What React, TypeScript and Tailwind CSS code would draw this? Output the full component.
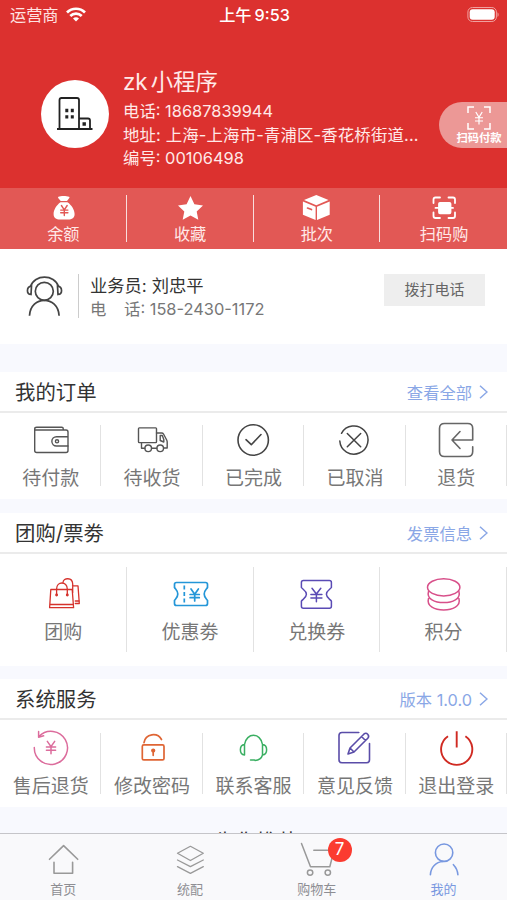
import type { ReactNode } from "react";

interface Entry {
  label: string;
  icon: ReactNode;
}

const yen = (cx: number, top: number, h: number, w: number) =>
  `M${cx - w * 0.8} ${top}L${cx} ${top + h * 0.43}L${cx + w * 0.8} ${top}M${cx} ${top + h * 0.43}V${top + h}M${cx - w} ${top + h * 0.46}H${cx + w}M${cx - w} ${top + h * 0.72}H${cx + w}`;

function Icon({
  color = "#555",
  stroke = 1.4,
  h = 40,
  children,
}: {
  color?: string;
  stroke?: number;
  h?: number;
  children: ReactNode;
}) {
  return (
    <svg
      width="44"
      height={h}
      viewBox={`0 0 44 ${h}`}
      fill="none"
      stroke={color}
      strokeWidth={stroke}
      strokeLinecap="round"
      strokeLinejoin="round"
      className="block shrink-0"
    >
      {children}
    </svg>
  );
}

const shortcuts: Entry[] = [
  {
    label: "余额",
    icon: (
      <Icon h={30} color="none">
        <path fill="#fff" d="M17.5 2.8c2-1.2 8-1.2 10.5 0 .8.4.6 1-.1 1.8L26 7h-6.300l-2.100-2.500c-.6-.7-.8-1.300-.1-1.700zM19.500 8.200h7c4 2.700 7.100 7.600 7.100 11.800 0 4-2.600 5.500-6.500 5.500h-8c-4 0-6.500-1.500-6.500-5.500 0-4.200 3-9.100 6.900-11.800z" />
        <path stroke="#e25855" strokeWidth="1.400" d={yen(23.3, 11.5, 10, 3.6)} />
      </Icon>
    ),
  },
  {
    label: "收藏",
    icon: (
      <Icon h={30} color="none">
        <path fill="#fff" d="M22.500 2l3.900 8.300 8.600 1.100-6.300 6.100 1.600 8.300-7.800-4.200-7.800 4.200 1.600-8.300L10 11.400l8.600-1.100z" />
      </Icon>
    ),
  },
  {
    label: "批次",
    icon: (
      <Icon h={30} color="none">
        <path fill="#fff" d="M22.300 1l12.200 5-12.200 5.200L10 6zM8.900 7.500l12.700 5.200V26L8.900 20.700zM35.700 7.500L23 12.700V26l12.700-5.300z" />
        <path stroke="#e25855" strokeWidth="1.600" d="M13.500 14l4 1.600" />
      </Icon>
    ),
  },
  {
    label: "扫码购",
    icon: (
      <Icon h={30} color="#fff" stroke={1.8}>
        <path d="M11.500 9V5.500q0-2 2-2H18M26.500 3.500H31q2 0 2 2V9M33 18.500V22q0 2-2 2h-4.500M18 24h-4.500q-2 0-2-2v-3.500M13.500 13.900h17.500" />
        <rect x="17" y="8.800" width="11.500" height="10.500" rx="1" fill="#fff" />
      </Icon>
    ),
  },
];

const orders: Entry[] = [
  {
    label: "待付款",
    icon: (
      <Icon>
        <path d="M40 16V12q0-2-2-2H6.700v20.500q0 2 2 2H38q2 0 2-2V26M6.700 10V9q0-1.700 2-1.700h25q1.600 0 1.600 1.700v1" />
        <path d="M40 16.700H28.500a4.600 4.600 0 0 0 0 9.300H40z" />
        <circle cx="29" cy="21.300" r="1.600" />
      </Icon>
    ),
  },
  {
    label: "待收货",
    icon: (
      <Icon>
        <rect x="8.500" y="7.900" width="18" height="14.700" rx=".8" />
        <path d="M26.500 13h5.200q1.200 0 1.800 1l3.200 6q.5 1 .5 2v6h-3.500M26.900 28.200h-5.300M14.900 28.200h-3.400v-5.600" />
        <path d="M30.200 15.500v5l3.600 1.500v-2.500l-1.500-4z" />
        <circle cx="18.200" cy="28.300" r="3.300" />
        <circle cx="30.200" cy="28.300" r="3.300" />
      </Icon>
    ),
  },
  {
    label: "已完成",
    icon: (
      <Icon color="#444" stroke={1.600}>
        <circle cx="22.200" cy="20" r="15.200" />
        <path d="M15 19.700l5.300 5L30 14.500" />
      </Icon>
    ),
  },
  {
    label: "已取消",
    icon: (
      <Icon color="#444" stroke={1.500}>
        <path d="M7.800 21a14.100 14.100 0 1 0 1.700-7.700M15.300 13.500l13.400 13.300M28.700 13.500L15.300 26.800" />
      </Icon>
    ),
  },
  {
    label: "退货",
    icon: (
      <Icon color="#666" stroke={1.600}>
        <path d="M38.700 26.700v4.800q0 5-5 5H10.500q-5 0-5-5v-23q0-5 5-5h23.200q5 0 5 5V20H18M26 11.500L18 20l8 8.500" />
      </Icon>
    ),
  },
];

const coupons: Entry[] = [
  {
    label: "团购",
    icon: (
      <Icon color="#d5322c" stroke={1.300}>
        <path d="M9.800 15.500h21.400l1.400 18.200H8.600zM8.900 30.500h23.500M15.600 21v-6c0-8 10.700-8 10.700 0v6" />
        <path d="M22 8.500c.3-5 9.500-5.500 9.700 1.500v8.500M31.500 11.800H37l1.300 17.700h-4" />
        <circle cx="15.600" cy="21" r=".8" />
        <circle cx="26.300" cy="21" r=".8" />
        <path d="M34.300 27h3.600" />
      </Icon>
    ),
  },
  {
    label: "优惠劵",
    icon: (
      <Icon color="#2496d8" stroke={1.700}>
        <path d="M8.500 8.500h29q2 0 2 2v3c-1 1.800-3.300 3-3.300 6.500s2.300 4.700 3.300 6.500v3q0 2-2 2h-29q-2 0-2-2v-3c1-1.800 3.300-3 3.300-6.500s-2.300-4.700-3.300-6.500v-3q0-2 2-2z" />
        <path strokeLinecap="butt" strokeDasharray="4 2.500" d="M16.300 11.500v17.500" />
        <path d={yen(26.700, 15, 12, 4.600)} />
      </Icon>
    ),
  },
  {
    label: "兑换券",
    icon: (
      <Icon color="#5a4bb5" stroke={1.500}>
        <path d="M9.400 6.500h26q2 0 2 2v5c-1 1.800-5 3-5 6.800s4 5 5 6.800v5.200q0 2-2 2h-26q-2 0-2-2v-5.200c1-1.800 5-3 5-6.800s-4-5-5-6.800v-5q0-2 2-2z" />
        <path d={yen(22.400, 14.300, 13.400, 5.500)} />
      </Icon>
    ),
  },
  {
    label: "积分",
    icon: (
      <Icon color="#d8508a" stroke={1.500}>
        <ellipse cx="22.700" cy="13.300" rx="16.200" ry="8.600" />
        <path d="M7.500 17.500c-4.500 14.800 34.900 14.800 30.400 0M7.500 24.500c-4.500 15.200 34.900 15.200 30.400 0" />
      </Icon>
    ),
  },
];

const services: Entry[] = [
  {
    label: "售后退货",
    icon: (
      <Icon color="#dc6c9c" stroke={1.500}>
        <path d="M6.300 19.500a16.600 16.600 0 1 0 4.800-11.300M10.600 3.500v5.800l5-1.500" />
        <path d={yen(23, 13.300, 12.500, 4.600)} />
      </Icon>
    ),
  },
  {
    label: "修改密码",
    icon: (
      <Icon color="#df6534" stroke={1.700}>
        <rect x="12.300" y="16.900" width="21.700" height="15" rx="1.500" />
        <path d="M14 14.600c1.500-9.300 13.500-10.500 17.500-3.100M23.200 23v4.300" />
        <circle cx="23.200" cy="22.600" r="1.300" fill="#df6534" />
      </Icon>
    ),
  },
  {
    label: "联系客服",
    icon: (
      <Icon color="#3aaf62" stroke={1.500}>
        <path d="M13.500 16.500c2-12.200 16-12.200 18 0v10.500M31.500 27c-1 3.500-4 5.300-7.500 5.500M13.500 16.500V27c-5.500-.5-5.500-10 0-10.500zM31.500 16.500c5.500.5 5.500 10 0 10.500" />
        <path d="M19.500 32h4" />
      </Icon>
    ),
  },
  {
    label: "意见反馈",
    icon: (
      <Icon color="#5a4da8" stroke={1.600}>
        <path d="M26.800 4.500H10q-3 0-3 3v24.300q0 3 3 3h24.500q3 0 3-3V15.500" />
        <path d="M16 26l2-6L31.800 6.200c2.800-2.500 6.300 1.200 4 4L22 24zM29.500 8.500l4 4M18 20l4 4" />
      </Icon>
    ),
  },
  {
    label: "退出登录",
    icon: (
      <Icon color="#d02a22" stroke={1.900}>
        <path strokeLinecap="butt" d="M22.700 3.300V19.500M14 8.300a15.600 15.600 0 1 0 17.400 0" />
      </Icon>
    ),
  },
];

const tabs: Entry[] = [
  {
    label: "首页",
    icon: (
      <Icon color="#999" stroke={1.600}>
        <path d="M8.500 21.300L22.600 7.600l14.100 13.700M13 24.300v11h18.600v-11" />
      </Icon>
    ),
  },
  {
    label: "统配",
    icon: (
      <Icon color="#999" stroke={1.300}>
        <path d="M22.400 8.300l12.900 7-12.900 7.200-12.900-7.200zM9.500 22l12.900 6.700L35.300 22M9.500 28.600l12.900 6.700 12.900-6.700" />
      </Icon>
    ),
  },
  {
    label: "购物车",
    icon: (
      <Icon color="#999" stroke={1.500}>
        <path d="M6.500 5.500l9 23.200h19.300L39 12.300H18.800" />
        <circle cx="15.100" cy="34.600" r="2.700" />
        <circle cx="32.800" cy="34.600" r="2.700" />
      </Icon>
    ),
  },
  {
    label: "我的",
    icon: (
      <Icon color="#7898e0" stroke={1.600}>
        <circle cx="22.100" cy="14.700" r="8.700" />
        <path d="M8.400 36.700c.4-7.500 5.500-12.700 12.600-13.200M31.400 26.700c2.600 2.700 4.200 6 4.500 10" />
      </Icon>
    ),
  },
];

function SectionHead({ title, link }: { title: string; link: string }) {
  return (
    <div className="flex h-[41px] items-center justify-between border-b-2 border-[#ebebeb] pt-[3px] pr-[19px] pl-[15px]">
      <h2 className="text-[20.400px] text-[#333]">{title}</h2>
      <div className="flex items-center gap-[7px] text-[16.300px] text-[#8aa7e6]">
        {link}
        <svg className="-mt-[2px]" width="9" height="14" viewBox="0 0 9 14" fill="none" stroke="currentColor" strokeWidth="1.500">
          <path d="M1 .8L8 7l-7 6.200" />
        </svg>
      </div>
    </div>
  );
}

function Row({ items }: { items: Entry[] }) {
  return (
    <div className="grid grid-cols-5">
      {items.map((item) => (
        <div key={item.label} className="flex h-[61px] flex-col items-center border-r border-[#e2e2e2]">
          <div className="-mt-[5px]">{item.icon}</div>
          <span className="mt-[5px] ml-px text-[19px] leading-[28px] whitespace-nowrap text-[#777]">{item.label}</span>
        </div>
      ))}
    </div>
  );
}

export default function App() {
  return (
    <div className="flex h-[900px] w-[507px] flex-col overflow-hidden bg-[#f8f9fe] font-['Inter','Noto_Sans_CJK_SC',sans-serif]">
      <header className="relative h-[188px] shrink-0 bg-[#dc312f] text-white">
        {/* Status bar */}
        <div className="grid h-[29px] grid-cols-3 items-center pr-[8px] pl-[10px] text-[16.200px]">
          <div className="flex items-center gap-[7px] pt-px text-[#ffe3e2]">
            运营商
            <svg width="20" height="15" viewBox="0 0 20 15" fill="none" stroke="#fff" strokeWidth="2.700">
              <path d="M1 5.500c5-5 13-5 18 0M4.300 9c3.200-3.200 8.200-3.200 11.400 0" />
              <path d="M10 14.500l-3-3c1.700-1.600 4.300-1.600 6 0z" fill="#fff" stroke="none" />
            </svg>
          </div>
          <div className="pt-[2px] text-center font-medium whitespace-nowrap">
            上午<span className="ml-[3px]">9:53</span>
          </div>
          <svg className="justify-self-end" width="32" height="16" viewBox="0 0 32 16">
            <rect x=".9" y=".5" width="28.500" height="14" rx="4.500" fill="none" stroke="#f0a09e" />
            <rect x="2.700" y="2.200" width="25" height="10.500" rx="3" fill="#fff" />
            <path d="M30.500 5.200c1.500.8 1.500 4 0 4.800z" fill="#f0a09e" />
          </svg>
        </div>

        {/* Company profile */}
        <div className="flex pt-[38px] pl-[41px]">
          <div className="mt-[13px] mr-[14px] flex size-[68px] shrink-0 items-center justify-center rounded-full bg-white">
            <svg width="38" height="36" viewBox="0 0 38 36" fill="none" stroke="#222" strokeWidth="1.800">
              <path d="M3.500 33V4q0-2 2-2h15.500q2 0 2 2v29M23 22.500h9q2 0 2 2V33M1 33h35.500" />
              <path d="M9.300 14.500h3M14.800 14.500h3M9.300 20.800h3M14.800 20.800h3M26.500 28h3.400" strokeWidth="3.300" />
            </svg>
          </div>
          <div className="pt-px text-[16.400px] leading-[23.700px] text-[#ffe9e8]">
            <h1 className="mb-[4px] text-[22.400px] leading-[28px]">
              zk<span className="ml-[3px]">小程序</span>
            </h1>
            <p>电话: 18687839944</p>
            <p className="tracking-[0.16px]">地址: 上海-上海市-青浦区-香花桥街道...</p>
            <p>编号: 00106498</p>
          </div>
        </div>

        <button className="absolute top-[102px] right-0 flex h-[46px] w-[68px] flex-col items-center rounded-l-full bg-[#ec9896] pt-[4px] pl-[12px]">
          <svg width="24" height="24" viewBox="0 0 24 24" fill="none" stroke="#fff" strokeWidth="1.500">
            <path d="M1 7V1h6M17 1h6v6M23 17v6h-6M7 23H1v-6" />
            <path d={yen(12, 6, 12.500, 4)} strokeWidth="1.200" />
          </svg>
          <span className="mt-px text-[11.300px] leading-[15px] font-bold whitespace-nowrap">扫码付款</span>
        </button>
      </header>

      <nav className="grid h-[61px] shrink-0 grid-cols-4 bg-[#e25855] py-[7px] text-white">
        {shortcuts.map((item) => (
          <div
            key={item.label}
            className="flex h-[47px] flex-col items-center border-r border-[#f9dedd] last:border-r-0"
          >
            <div className="-mt-px">{item.icon}</div>
            <span className="-mt-px ml-px text-[16.200px] leading-[22px] text-[#ffe9e8]">{item.label}</span>
          </div>
        ))}
      </nav>

      {/* Sales contact */}
      <section className="flex h-[95px] shrink-0 items-start bg-white pt-[25px] pr-[22px] pl-[24px]">
        <svg width="40" height="44" viewBox="0 0 40 44" fill="none" stroke="#444" strokeWidth="1.700">
          <circle cx="20.300" cy="17.300" r="9" />
          <path d="M5.500 41.700c1-20.500 28.600-20.500 29.600 0M6.500 12.500c4-12.500 24-12.500 28 0" />
          <path d="M7.500 12.200c-5.300.7-5.300 7.800-.5 8.300zM33.500 12.200c5.300.7 5.300 7.800.5 8.300z" />
        </svg>
        <div className="mr-[11px] ml-[14px] h-[44px] w-px bg-[#ccc]" />
        <div className="flex-1 pt-px leading-[24px]">
          <p className="-mt-px text-[17.300px] text-[#333]">业务员: 刘忠平</p>
          <p className="-mt-px flex text-[16.400px] text-[#777]">
            <span className="w-[34px]">电</span>话: 158-2430-1172
          </p>
        </div>
        <button className="h-[32px] w-[101px] bg-[#eee] pt-px text-[15px] text-[#666]">拨打电话</button>
      </section>

      <section className="mt-[28px] h-[127px] shrink-0 bg-white">
        <SectionHead title="我的订单" link="查看全部" />
        <div className="pt-[12px]">
          <Row items={orders} />
        </div>
      </section>

      <section className="mt-[14px] h-[153px] shrink-0 bg-white">
        <SectionHead title="团购/票劵" link="发票信息" />
        <div className="grid grid-cols-4 pt-[13px]">
          {coupons.map((item) => (
            <div key={item.label} className="flex h-[85px] flex-col items-center border-r border-[#e2e2e2] pt-[7px]">
              {item.icon}
              <span className="mt-[5px] ml-px text-[19px] leading-[28px] text-[#777]">{item.label}</span>
            </div>
          ))}
        </div>
      </section>

      <section className="mt-[13px] h-[128px] shrink-0 bg-white">
        <SectionHead title="系统服务" link="版本 1.0.0" />
        <div className="pt-[13px]">
          <Row items={services} />
        </div>
      </section>

      <div className="h-[26px] shrink-0 overflow-hidden pt-[23px] text-center text-[20.400px] leading-[24px] text-[#333]">
        <span className="pl-[6px]">为你推荐</span>
      </div>

      <footer className="grid h-[67px] shrink-0 grid-cols-4 border-t border-[#c5c5c9] bg-[#f9f9fb] pt-[4px]">
        {tabs.map((tab, i) => (
          <div key={tab.label} className="relative flex flex-col items-center">
            {tab.icon}
            <span
              className={
                i === 3
                  ? "mt-[2px] text-[13px] leading-[18px] text-[#7898e0]"
                  : "mt-[2px] text-[13px] leading-[18px] text-[#8e8e93]"
              }
            >
              {tab.label}
            </span>
            {tab.label === "购物车" && (
              <span className="absolute top-0 left-[74px] flex size-[24px] items-center justify-center rounded-full bg-[#fb3b30] text-[17px] text-white">
                7
              </span>
            )}
          </div>
        ))}
      </footer>
    </div>
  );
}
